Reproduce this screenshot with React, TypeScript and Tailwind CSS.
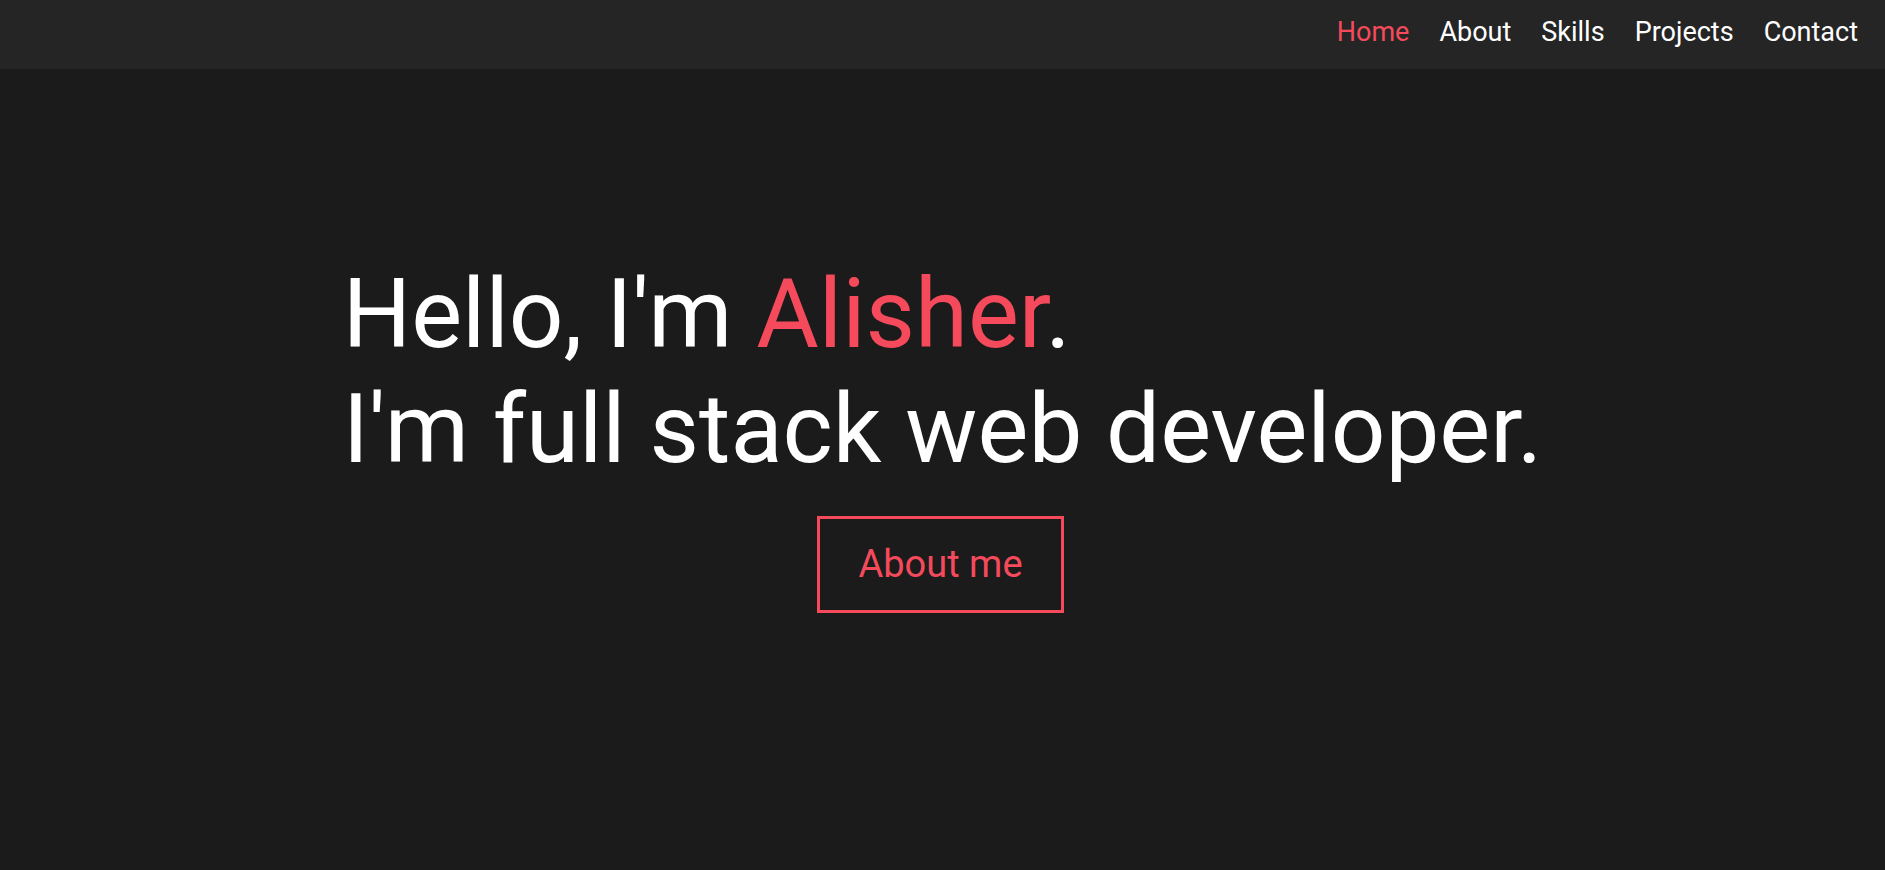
const links = ["Home", "About", "Skills", "Projects", "Contact"];

function Navbar() {
  return (
    <nav className="fixed top-0 left-0 right-0 z-10 h-[69px] bg-[#252525] flex items-center justify-end pr-[12px] pb-[5px]">
      <ul className="flex items-center">
        {links.map((link, i) => (
          <li key={link}>
            <a
              href={`#${link.toLowerCase()}`}
              className={`block px-[15px] text-[27px] ${
                i === 0 ? "text-[#f44a5b]" : "text-white"
              }`}
            >
              {link}
            </a>
          </li>
        ))}
      </ul>
    </nav>
  );
}

export default function App() {
  return (
    <div
      className="min-h-screen bg-[#1b1b1b] text-white"
      style={{ fontFamily: "Roboto, 'Liberation Sans', sans-serif" }}
    >
      <Navbar />

      <section className="h-screen flex flex-col items-center justify-center">
        <h1 className="text-[96px] leading-[1.2] font-normal">
          Hello, I'm <span className="text-[#f44a5b]">Alisher</span>.
          <br />
          I'm full stack web developer.
        </h1>

        <a
          href="#about"
          className="mt-[29px] mr-[4px] flex items-center justify-center w-[247px] h-[97px] border-[3px] border-[#f44a5b] text-[#f44a5b] text-[38px]"
        >
          About me
        </a>
      </section>
    </div>
  );
}
